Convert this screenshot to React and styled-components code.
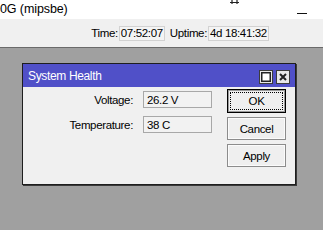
import React from 'react'
import styled, { createGlobalStyle } from 'styled-components'

const Global = createGlobalStyle`
  html, body {
    margin: 0;
    padding: 0;
    background: #a0a0a0;
  }
  body {
    width: 323px;
    height: 230px;
    overflow: hidden;
    font-family: "Liberation Sans", Arial, sans-serif;
    font-size: 11.5px;
    letter-spacing: -0.35px;
    color: #000;
    white-space: nowrap;
  }
`

const Page = styled.div`
  width: 323px;
  height: 230px;
  display: flex;
  flex-direction: column;
`

const TitleStrip = styled.div`
  height: 19px;
  background: #fff;
  display: flex;
  align-items: center;
  justify-content: space-between;
  padding-right: 16px;
`

const AppTitle = styled.div`
  font-size: 12.5px;
  letter-spacing: -0.1px;
  margin-top: -2px;
`

const Controls = styled.div`
  display: flex;
  align-items: flex-start;
  gap: 58px;
  height: 19px;
`

const Toolbar = styled.div`
  height: 28px;
  background: #f0f0f0;
  border-bottom: 1px solid #6a6a6a;
  display: flex;
  align-items: center;
  justify-content: flex-end;
  padding-right: 54px;
`

const Label = styled.span`
  margin-right: 1px;
`

const Readout = styled.div`
  width: ${p => p.$w}px;
  height: 15px;
  box-sizing: border-box;
  background: #f4f4f4;
  border: 1px solid #d2d2d2;
  display: flex;
  align-items: center;
  padding-left: 1px;
  margin-right: ${p => p.$mr || 0}px;
`

const Desktop = styled.div`
  flex: 1;
  background: #a0a0a0;
  padding: 15px 0 0 22px;
`

const Window = styled.div`
  width: 274px;
  box-sizing: border-box;
  border: 1px solid #1e1e1e;
  box-shadow: 1px 1px 0 #3a3a3a;
  background: #f0f0f0;
`

const Caption = styled.div`
  height: 23px;
  background: #5050c8;
  color: #fff;
  display: flex;
  align-items: center;
  justify-content: space-between;
  padding: 0 5px 0 5px;
`

const CaptionText = styled.span`
  font-size: 12px;
`

const CaptionButtons = styled.div`
  display: flex;
  gap: 3px;
  margin-top: 2px;
`

const CapBtn = styled.div`
  width: 14px;
  height: 14px;
  box-sizing: border-box;
  background: #e8e8e8;
  border: 1px solid #3c3c3c;
  display: flex;
  align-items: center;
  justify-content: center;
`

const Body = styled.div`
  display: flex;
  padding: 2px 8px 17px 0;
  gap: 15px;
`

const Form = styled.div`
  display: grid;
  grid-template-columns: 110px 69px;
  column-gap: 10px;
  row-gap: 8px;
  align-content: start;
  padding-top: 2px;
`

const FieldLabel = styled.div`
  text-align: right;
  align-self: center;
`

const Field = styled.div`
  height: 17px;
  box-sizing: border-box;
  background: #f2f2f2;
  border: 1px solid #a8a8a8;
  display: flex;
  align-items: center;
  padding-left: 3px;
`

const Buttons = styled.div`
  display: flex;
  flex-direction: column;
  gap: 4px;
`

const Button = styled.button`
  position: relative;
  width: 59px;
  height: ${p => (p.$default ? 24 : 23)}px;
  box-sizing: border-box;
  font: inherit;
  letter-spacing: inherit;
  color: #000;
  background: #efefef;
  border: 1px solid ${p => (p.$default ? '#000' : '#8c8c8c')};
  box-shadow: inset 0 0 0 1px ${p => (p.$default ? '#9a9a9a' : '#fbfbfb')};
  padding: 0;
  &::after {
    content: '';
    display: ${p => (p.$default ? 'block' : 'none')};
    position: absolute;
    inset: 2px;
    border: 1px dotted #000;
  }
`

export default function App() {
  return (
    <>
      <Global />
      <Page>
        <TitleStrip>
          <AppTitle>0G (mipsbe)</AppTitle>
          <Controls>
            <svg width="9" height="4" viewBox="0 0 9 4">
              <path d="M0 2.5H9M2 0V4M7 0V4" stroke="#222" strokeWidth="1.2" fill="none" />
            </svg>
            <svg width="10" height="19" viewBox="0 0 10 19">
              <path d="M0 13.5H10" stroke="#111" strokeWidth="1" fill="none" />
            </svg>
          </Controls>
        </TitleStrip>
        <Toolbar>
          <Label>Time:</Label>
          <Readout $w={46} $mr={5}>07:52:07</Readout>
          <Label>Uptime:</Label>
          <Readout $w={61}>4d 18:41:32</Readout>
        </Toolbar>
        <Desktop>
          <Window>
            <Caption>
              <CaptionText>System Health</CaptionText>
              <CaptionButtons>
                <CapBtn>
                  <svg width="10" height="10" viewBox="0 0 10 10">
                    <rect x="0.75" y="0.75" width="8.5" height="8.5" fill="#fff" stroke="#222" strokeWidth="1.5" />
                  </svg>
                </CapBtn>
                <CapBtn>
                  <svg width="8" height="8" viewBox="0 0 8 8">
                    <path d="M1 1L7 7M7 1L1 7" stroke="#222" strokeWidth="2" fill="none" />
                  </svg>
                </CapBtn>
              </CaptionButtons>
            </Caption>
            <Body>
              <Form>
                <FieldLabel>Voltage:</FieldLabel>
                <Field>26.2 V</Field>
                <FieldLabel>Temperature:</FieldLabel>
                <Field>38 C</Field>
              </Form>
              <Buttons>
                <Button $default>OK</Button>
                <Button>Cancel</Button>
                <Button>Apply</Button>
              </Buttons>
            </Body>
          </Window>
        </Desktop>
      </Page>
    </>
  )
}
